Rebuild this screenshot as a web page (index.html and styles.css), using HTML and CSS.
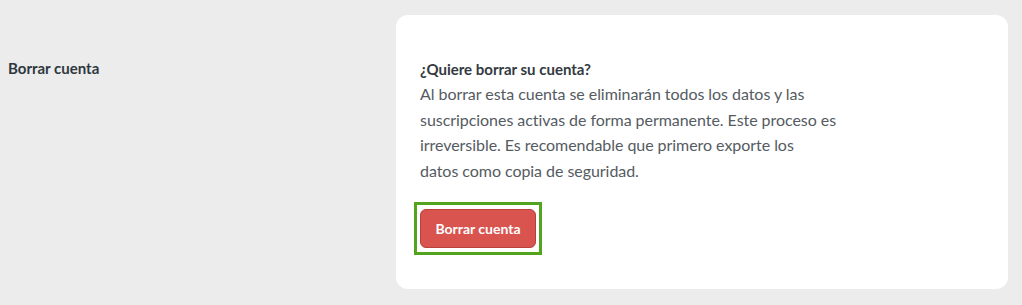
FILE: index.html
```html
<!DOCTYPE html>
<html lang="es">

<head>
    <meta charset="UTF-8">
    <meta name="viewport" content="width=device-width, initial-scale=1.0">
    <title>Borrar cuenta</title>
    <link rel="stylesheet" href="styles.css">
</head>

<body>
    <div class="settings-row">
        <div class="settings-label">Borrar cuenta</div>
        <div class="settings-card">
            <h3 class="card-title">¿Quiere borrar su cuenta?</h3>
            <p class="card-text">Al borrar esta cuenta se eliminarán todos los datos y las<br>
                suscripciones activas de forma permanente. Este proceso es<br>
                irreversible. Es recomendable que primero exporte los<br>
                datos como copia de seguridad.</p>
            <div class="button-focus">
                <button class="btn-danger">Borrar cuenta</button>
            </div>
        </div>
    </div>
</body>

</html>
```

FILE: styles.css
```css
body {
    margin: 0;
    background-color: #ebeceb;
    font-family: Lato, "Open Sans", sans-serif;
    color: #333a40;
}

.settings-row {
    display: flex;
    padding-top: 15px;
}

.settings-label {
    width: 388px;
    padding-left: 8px;
    padding-top: 44px;
    font-size: 15px;
    font-weight: bold;
    color: #2f3740;
}

.settings-card {
    width: 564px;
    height: 230px;
    padding: 44px 24px 0 24px;
    background-color: #ffffff;
    border-radius: 12px;
}

.card-title {
    margin: 0;
    font-size: 15px;
    font-weight: bold;
    line-height: 20px;
    color: #333a40;
}

.card-text {
    margin: 2px 0 0 0;
    font-size: 16px;
    line-height: 25.5px;
    letter-spacing: -0.05px;
    color: #555b62;
}

.button-focus {
    display: inline-block;
    margin: 19px 0 0 -6px;
    padding: 4px 3px;
    border: 3px solid #52a41f;
    background-color: #ffffff;
}

.btn-danger {
    display: block;
    width: 116px;
    height: 39px;
    padding: 0;
    font-family: inherit;
    font-size: 14px;
    font-weight: bold;
    color: #ffffff;
    background-color: #d9534f;
    border: 1px solid #b9413d;
    border-radius: 6px;
    cursor: pointer;
}
```
